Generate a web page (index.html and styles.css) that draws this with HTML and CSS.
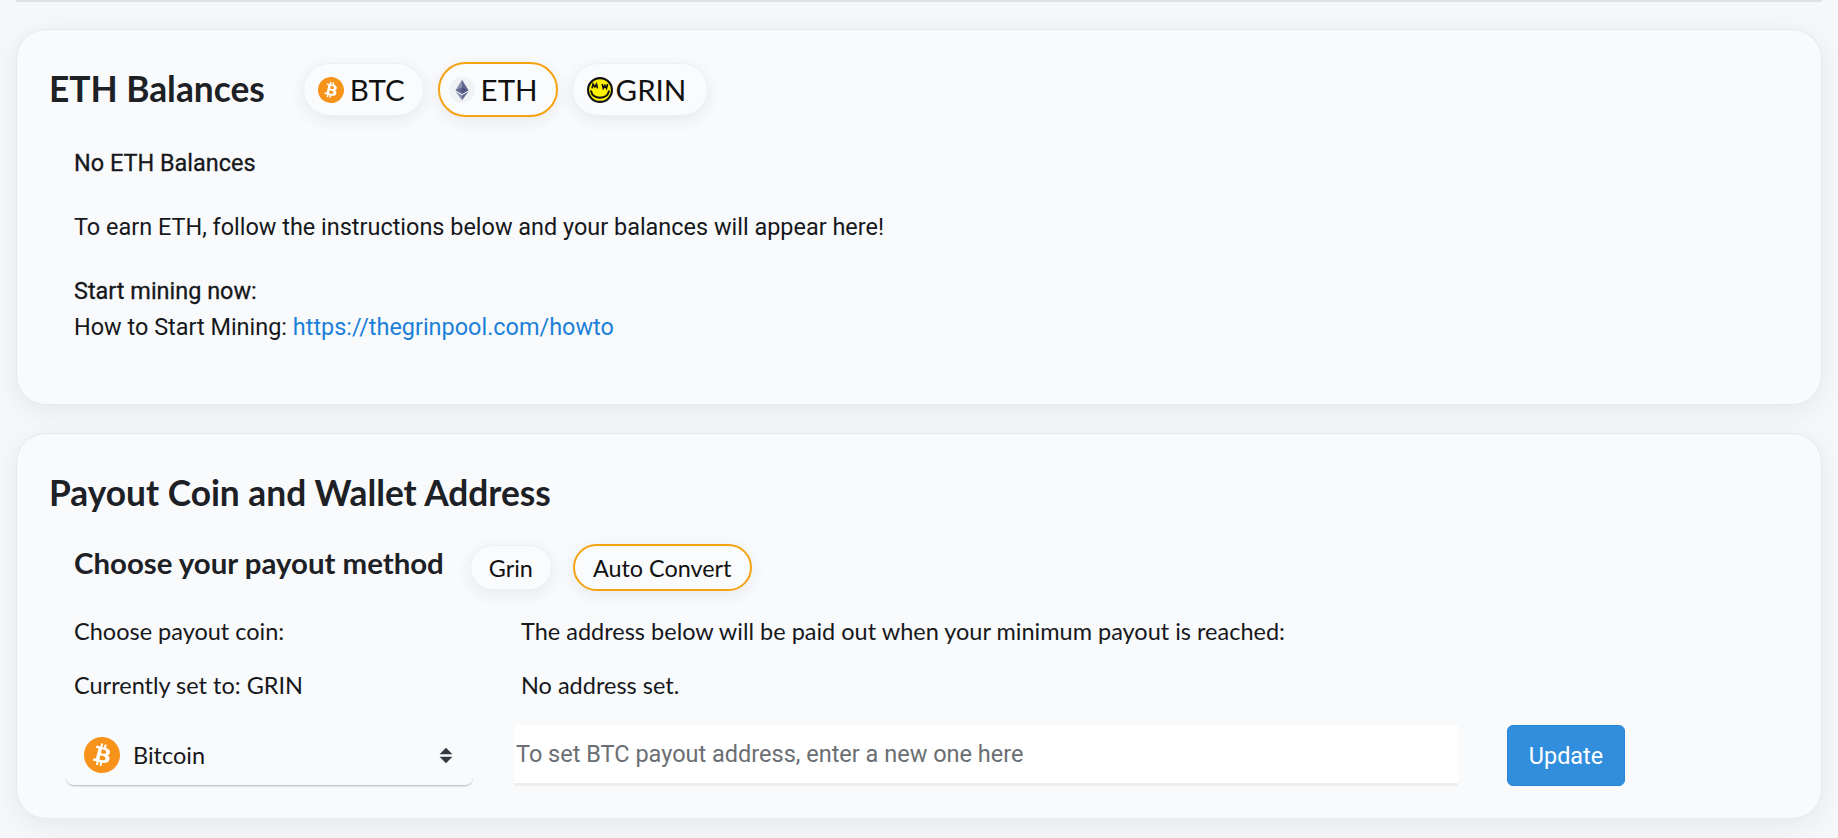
FILE: index.html
```html
<!DOCTYPE html>
<html>
  <head>
    <meta charset="utf-8" />
    <title>Miner payouts</title>
    <link rel="stylesheet" href="styles.css">
  </head>

  <body>
    <svg class="icon-defs" width="0" height="0">
      <symbol id="icon-btc" viewBox="0 0 24 24">
        <circle cx="12" cy="12" r="8" fill="#fff" />
        <path fill="#f7931a" d="M23.638 14.904c-1.602 6.43-8.113 10.34-14.542 8.736C2.67 22.05-1.244 15.525.362 9.105 1.962 2.67 8.475-1.243 14.9.358c6.43 1.605 10.342 8.115 8.738 14.548v-.002zm-6.35-4.613c.24-1.59-.974-2.45-2.64-3.03l.54-2.153-1.315-.33-.525 2.107c-.345-.087-.705-.167-1.064-.25l.526-2.127-1.32-.33-.54 2.165c-.285-.067-.565-.132-.84-.2l-1.815-.45-.35 1.407s.975.225.955.236c.535.136.63.486.615.766l-1.477 5.92c-.075.166-.24.406-.614.314.015.02-.96-.24-.96-.24l-.66 1.51 1.71.426.93.242-.54 2.19 1.32.327.54-2.17c.36.1.705.19 1.05.273l-.51 2.154 1.32.33.545-2.19c2.24.427 3.93.257 4.64-1.774.57-1.637-.03-2.58-1.217-3.196.854-.193 1.5-.76 1.68-1.93h.01zm-3.01 4.22c-.404 1.64-3.157.75-4.05.53l.72-2.9c.896.23 3.757.67 3.33 2.37zm.41-4.24c-.37 1.49-2.662.735-3.405.55l.654-2.64c.744.18 3.137.524 2.75 2.084v.006z" />
      </symbol>
      <symbol id="icon-eth" viewBox="0 0 24 24">
        <circle cx="12" cy="12" r="12" fill="#f1f2f4" />
        <path fill="#8a92b2" d="M12 2.500 6 12.200l6 3.500z" />
        <path fill="#62688f" d="M12 2.500v13.200l6-3.500z" />
        <path fill="#454a75" d="M12 9.400 6 12.200l6 3.500 6-3.500z" opacity=".6" />
        <path fill="#8a92b2" d="m6 13.400 6 8.100v-4.700z" />
        <path fill="#62688f" d="M12 16.800v4.700l6-8.100z" />
      </symbol>
      <symbol id="icon-grin" viewBox="0 0 24 24">
        <circle cx="12" cy="12" r="11" fill="#fff200" stroke="#111" stroke-width="2" />
        <path fill="none" stroke="#111" stroke-width="1.500" d="M4.600 10.500 5.600 6.500l1.600 2.600 1.600-2.600.9 4M14 6.500l1 4 1.500-2.700 1.500 2.700 1-4" />
        <path fill="none" stroke="#111" stroke-width="1.800" stroke-linecap="round" d="M3.800 13.200c1.600 8 14.800 8 16.400 0" />
      </symbol>
    </svg>

    <div class="top-rule"></div>

    <section class="card card-balances">
      <div class="card-head">
        <h2 class="card-title">ETH Balances</h2>
        <div class="coin-pills">
          <button class="pill pill-coin"><svg class="pill-icon"><use href="#icon-btc" /></svg>BTC</button>
          <button class="pill pill-coin pill-active"><svg class="pill-icon"><use href="#icon-eth" /></svg>ETH</button>
          <button class="pill pill-coin pill-grin"><svg class="pill-icon"><use href="#icon-grin" /></svg>GRIN</button>
        </div>
      </div>
      <div class="balances-body">
        <p class="medium">No ETH Balances</p>
        <p>To earn ETH, follow the instructions below and your balances will appear here!</p>
        <p class="start-mining medium">Start mining now:</p>
        <p class="howto">How to Start Mining: <a href="#">https://thegrinpool.com/howto</a></p>
      </div>
    </section>

    <section class="card card-payout">
      <h2 class="card-title">Payout Coin and Wallet Address</h2>
      <div class="method-row">
        <h3 class="method-title">Choose your payout method</h3>
        <button class="pill pill-small">Grin</button>
        <button class="pill pill-small pill-active">Auto Convert</button>
      </div>
      <div class="info-grid">
        <div>Choose payout coin:</div>
        <div>The address below will be paid out when your minimum payout is reached:</div>
        <div>Currently set to: GRIN</div>
        <div>No address set.</div>
      </div>
      <div class="form-row">
        <div class="coin-select">
          <svg class="select-icon"><use href="#icon-btc" /></svg>
          <span class="select-label">Bitcoin</span>
          <svg class="select-arrows" viewBox="0 0 12 20" preserveAspectRatio="none"><path d="M6 1 11.500 8.500H.5zM6 19 .5 11.500h11z" /></svg>
        </div>
        <input class="address-input" type="text" placeholder="To set BTC payout address, enter a new one here" />
        <button class="update-button">Update</button>
      </div>
    </section>
  </body>
</html>
```

FILE: styles.css
```css
* {
  box-sizing: border-box;
}

html,
body {
  height: 100%;
}

body {
  margin: 0;
  padding: 0 16px;
  overflow: hidden;
  background: #f6f7f9;
  color: #16181b;
  font-family: "Roboto", sans-serif;
  font-size: 23.45px;
  -webkit-font-smoothing: antialiased;
}

.icon-defs {
  position: absolute;
}

.top-rule {
  height: 2px;
  background: #dfe1e5;
}

.card {
  background: #f9fafc;
  border-radius: 30px;
  border: 1px solid #e7e9ec;
  box-shadow: 0 6px 24px rgba(30, 40, 60, 0.07);
}

.card-balances {
  height: 376px;
  margin-top: 27px;
  padding: 30px 32px 0;
}

.card-payout {
  height: 386px;
  margin-top: 28px;
  padding: 37px 32px 0;
}

.card-title {
  margin: 0;
  font-family: "Lato", sans-serif;
  font-size: 35.3px;
  font-weight: 700;
  line-height: 44px;
  color: #1d2126;
}

.card-head {
  display: flex;
  align-items: center;
}

.coin-pills {
  display: flex;
  align-items: center;
  gap: 14px;
  margin: 2px 0 0 38px;
}

.pill {
  display: inline-flex;
  align-items: center;
  justify-content: center;
  background: #fafbfc;
  color: #111;
  font-family: "Lato", sans-serif;
  border: 1px solid #eff0f2;
  border-radius: 28px;
  box-shadow: 0 4px 16px rgba(30, 40, 60, 0.08);
  padding: 0;
}

.pill-active {
  border: 2px solid #f5a312;
}

.pill-coin {
  height: 53px;
  padding: 0 18px 0 14px;
  font-size: 29.5px;
}

.pill-coin.pill-active {
  height: 55px;
  padding-left: 9px;
}

.pill-coin.pill-grin {
  padding-right: 21px;
}

.pill-icon {
  width: 26px;
  height: 26px;
  margin-right: 6px;
}

.pill-grin .pill-icon {
  margin-right: 3px;
}

.balances-body {
  padding: 32px 0 0 25px;
}

.balances-body p {
  margin: 0 0 36px;
  line-height: 28px;
}

.balances-body .medium {
  -webkit-text-stroke: 0.3px #16181b;
}

.balances-body .start-mining {
  margin-bottom: 8px;
}

.balances-body a {
  color: #1b80d8;
  text-decoration: none;
}

.method-row {
  display: flex;
  align-items: center;
  height: 52px;
  margin: 21px 0 0 25px;
}

.method-title {
  margin: 0 26px 0 0;
  font-family: "Lato", sans-serif;
  font-size: 29.4px;
  font-weight: 700;
  color: #1d2126;
}

.pill-small {
  height: 45px;
  padding: 2px 18px 0;
  margin: 10px 21px 0 0;
  font-size: 23.4px;
}

.pill-small.pill-active {
  height: 47px;
}

.info-grid {
  display: grid;
  grid-template-columns: 447px 1fr;
  row-gap: 26px;
  margin: 29px 0 0 25px;
  font-family: "Lato", sans-serif;
  font-size: 23.5px;
  line-height: 28px;
}

.form-row {
  display: flex;
  align-items: stretch;
  height: 61px;
  margin: 26px 0 0 17px;
}

.coin-select {
  display: flex;
  align-items: center;
  width: 407px;
  padding: 0 20px 0 18px;
  border-radius: 8px;
  border-bottom: 1px solid #c3c9d1;
  box-shadow: 0 1px 1px rgba(60, 70, 90, 0.12);
  font-family: "Lato", sans-serif;
  font-size: 23.5px;
}

.select-icon {
  width: 36px;
  height: 36px;
  margin-right: 13px;
}

.select-label {
  flex: 1;
}

.select-arrows {
  width: 14px;
  height: 17px;
  fill: #32383f;
}

.address-input {
  width: 944px;
  margin-left: 41px;
  padding: 0 2px;
  border: 0;
  border-bottom: 3px solid #eeeeef;
  background: #fff;
  outline: 0;
  font-family: "Roboto", sans-serif;
  font-size: 23.5px;
}

.address-input::placeholder {
  color: #6b6e72;
}

.update-button {
  width: 118px;
  margin-left: 49px;
  border: 1px solid #2a85d6;
  border-radius: 6px;
  background: #318edd;
  color: #fff;
  font-family: "Roboto", sans-serif;
  font-size: 23.4px;
}
```
